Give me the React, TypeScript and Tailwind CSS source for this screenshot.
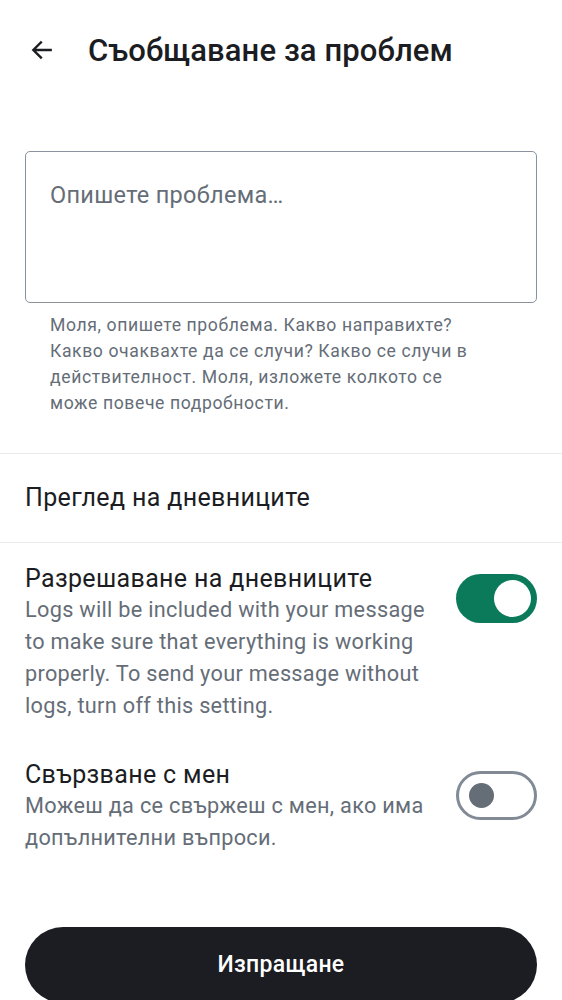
import { useState } from "react";

function Toggle({ on, onChange }: { on: boolean; onChange: () => void }) {
  return (
    <button
      onClick={onChange}
      className={
        on
          ? "relative w-[81px] h-[49px] rounded-full bg-[#0b7a5b] shrink-0"
          : "relative w-[81px] h-[49px] rounded-full border-[3px] border-[#818a95] bg-white shrink-0"
      }
    >
      {on ? (
        <span className="absolute right-[6px] top-[6px] w-[37px] h-[37px] rounded-full bg-white" />
      ) : (
        <span className="absolute left-[10px] top-[9px] w-[25px] h-[25px] rounded-full bg-[#656d77]" />
      )}
    </button>
  );
}

export default function App() {
  const [logs, setLogs] = useState(true);
  const [contact, setContact] = useState(false);

  return (
    <div className="w-[562px] h-[1000px] overflow-hidden bg-white text-[#1b1d22] font-['Roboto',sans-serif]">
      {/* Header */}
      <div className="h-[100px] flex items-center pl-[29px]">
        <svg width="26" height="26" viewBox="0 0 24 24" fill="none" stroke="#1b1d22" strokeWidth="2.2" strokeLinecap="square">
          <path d="M20 12H5M11 5l-7 7 7 7" />
        </svg>
        <h1 className="ml-[33px] text-[31px] font-medium leading-none tracking-[0.1px]">Съобщаване за проблем</h1>
      </div>

      {/* Description field */}
      <div className="px-[25px] mt-[51px]">
        <div className="h-[152px] border border-[#8a929c] rounded-[5px] px-[24px] pt-[27px]">
          <p className="text-[23.5px] leading-[32px] text-[#656d77] tracking-[0.3px]">Опишете проблема…</p>
        </div>
        <p className="mt-[9px] ml-[25px] w-[440px] text-[17.6px] leading-[26px] text-[#656d77] tracking-[0.6px]">
          Моля, опишете проблема. Какво направихте? Какво очаквахте да се случи? Какво се случи в действителност. Моля, изложете колкото се може повече подробности.
        </p>
      </div>

      <div className="mt-[37px] border-t border-[#e9ebee]" />
      <div className="h-[88px] flex items-center px-[25px] text-[25px] tracking-[0.35px]">Преглед на дневниците</div>
      <div className="border-t border-[#e9ebee]" />

      {/* Settings */}
      <div className="px-[25px] pt-[21px] flex gap-[20px]">
        <div className="flex-1">
          <div className="text-[25px] leading-[30px] tracking-[0.35px]">Разрешаване на дневниците</div>
          <p className="text-[21.7px] leading-[32px] text-[#656d77] tracking-[0.3px]">
            Logs will be included with your message to make sure that everything is working properly. To send your message without logs, turn off this setting.
          </p>
        </div>
        <div className="pt-[10px]">
          <Toggle on={logs} onChange={() => setLogs(!logs)} />
        </div>
      </div>

      <div className="px-[25px] mt-[38px] flex gap-[20px]">
        <div className="flex-1">
          <div className="text-[25px] leading-[30px] tracking-[0.35px]">Свързване с мен</div>
          <p className="text-[21.7px] leading-[32px] text-[#656d77] tracking-[0.3px]">
            Можеш да се свържеш с мен, ако има допълнителни въпроси.
          </p>
        </div>
        <div className="pt-[11px]">
          <Toggle on={contact} onChange={() => setContact(!contact)} />
        </div>
      </div>

      <div className="px-[25px] mt-[73px]">
        <button className="w-full h-[76px] rounded-full bg-[#1b1d22] text-white text-[23px] font-medium tracking-[0.3px]">
          Изпращане
        </button>
      </div>
    </div>
  );
}
